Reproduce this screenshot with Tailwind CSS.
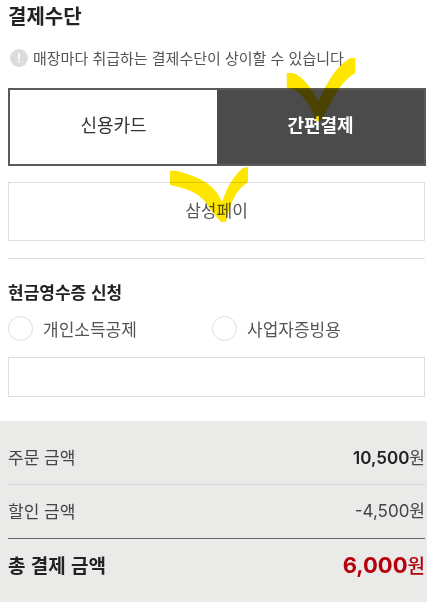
<!DOCTYPE html>
<html lang="ko">
<head>
  <meta charset="UTF-8" />
  <meta name="viewport" content="width=device-width, initial-scale=1.0" />
  <title>결제수단</title>
  <script src="https://cdn.jsdelivr.net/npm/@tailwindcss/browser@4"></script>
</head>
<body class="min-h-screen flex flex-col bg-white text-[#222] font-['Noto_Sans_CJK_KR',sans-serif]">

  <main class="pl-2 pr-[2px] pb-6">

    <!-- Payment method -->
    <h1 class="pt-1 text-[20px] leading-6 font-bold">결제수단</h1>
    <p class="mt-[18px] flex items-center gap-[5px] pl-[2px] text-[15px] leading-6 text-[#555]">
      <svg class="size-[18px]" viewBox="0 0 17 17" aria-hidden="true">
        <circle cx="8.5" cy="8.5" r="8.5" fill="#dcdcdc" />
        <path d="M7.5 4h2l-.4 6h-1.2z" fill="#fff" />
        <circle cx="8.5" cy="12" r="1" fill="#fff" />
      </svg>
      매장마다 취급하는 결제수단이 상이할 수 있습니다
    </p>

    <div class="mt-[18px] -mr-px grid grid-cols-2 h-[78px] border-2 border-[#5a5a5a] text-[18px] leading-6">
      <button type="button" class="pb-[6px] text-[#333]">신용카드</button>
      <button type="button" class="relative bg-[#4b4b4b] pb-[6px] font-bold text-white">
        간편결제
        <svg class="absolute left-1/2 -top-8 -translate-x-1/2 w-[69px] h-[64px] mix-blend-multiply" viewBox="0 0 69 64" fill="#ffe600" aria-hidden="true">
          <path d="M0 15H6C17 18 25 31 32 43C39 28 49 8 64 0H69V15C55 22 46 42 38 56L34 63H30C24 48 16 32 0 30Z" />
        </svg>
      </button>
    </div>

    <button type="button" class="relative mt-4 block w-full h-[59px] border border-[#dedede] pb-1 text-[17px] leading-6 text-[#555]">
      삼성페이
      <svg class="absolute left-[calc(50%-47px)] -top-4 w-[78px] h-[56px] mix-blend-multiply" viewBox="0 0 78 56" fill="#ffe600" aria-hidden="true">
        <path d="M0 4C7 3 11 5 17 7C36 13 46 21 52 35C57 20 64 8 73 1L78 0V15C65 24 61 35 56 55H51C47 50 43 46 40 42C31 25 17 22 0 18Z" />
      </svg>
    </button>

    <hr class="mt-[17px] border-[#dedede]" />

    <!-- Cash receipt -->
    <fieldset class="mt-[21px]">
      <legend class="text-[17px] leading-6 font-bold">현금영수증 신청</legend>
      <div class="mt-3 grid grid-cols-[204px_1fr] text-[17px] leading-6 text-[#555]">
        <label class="flex items-center gap-[10px]">
          <input type="radio" name="receipt" class="appearance-none size-[25px] rounded-full border border-[#dedede] bg-white checked:border-8 checked:border-[#4b4b4b]" />
          개인소득공제
        </label>
        <label class="flex items-center gap-[10px]">
          <input type="radio" name="receipt" class="appearance-none size-[25px] rounded-full border border-[#dedede] bg-white checked:border-8 checked:border-[#4b4b4b]" />
          사업자증빙용
        </label>
      </div>
      <input type="text" aria-label="현금영수증 번호" class="mt-4 block w-full h-10 border border-[#dedede] px-3 text-[17px] outline-none" />
    </fieldset>
  </main>

  <!-- Totals -->
  <dl class="grow bg-[#eaeae9] pl-2 pr-[2px] pt-[11px] text-[17px] leading-6 text-[#444]">
    <div class="flex h-[53px] items-center justify-between border-b border-[#d8d8d8] pb-[2px]">
      <dt>주문 금액</dt>
      <dd class="flex items-baseline"><span class="font-['Inter'] font-semibold text-[#222]">10,500</span>원</dd>
    </div>
    <div class="flex h-[54px] items-center justify-between border-b border-[#666] pb-[2px]">
      <dt>할인 금액</dt>
      <dd class="flex items-baseline"><span class="font-['Inter']">-4,500</span>원</dd>
    </div>
    <div class="flex h-[54px] items-center justify-between pb-[2px] text-[19px] font-bold text-[#222]">
      <dt>총 결제 금액</dt>
      <dd class="flex items-baseline text-[#b5000b]"><span class="font-['Inter'] text-[22px]">6,000</span><span class="font-medium">원</span></dd>
    </div>
  </dl>

</body>
</html>
